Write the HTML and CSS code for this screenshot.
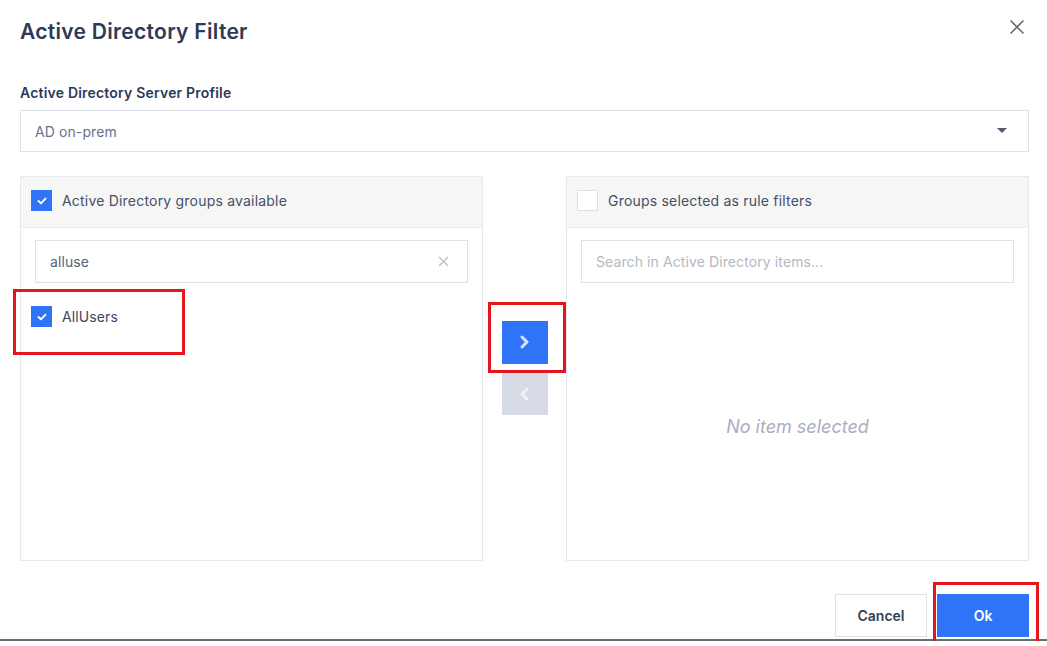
FILE: index.html
```html
<!DOCTYPE html>
<html lang="en">
<head>
<meta charset="utf-8">
<title>Active Directory Filter</title>
<link rel="stylesheet" href="styles.css">
</head>
<body>
<div class="dialog">
  <header class="dlg-header">
    <h1 class="dlg-title">Active Directory Filter</h1>
    <button class="close" aria-label="Close">
      <svg width="16" height="16" viewBox="0 0 16 16"><path d="M1.5 1.5 L14.5 14.5 M14.5 1.5 L1.5 14.5" stroke="#6b6f78" stroke-width="1.6" fill="none"/></svg>
    </button>
  </header>

  <label class="field-label">Active Directory Server Profile</label>
  <div class="select">
    <span class="select-value">AD on-prem</span>
    <svg class="caret" width="10" height="6" viewBox="0 0 10 6"><path d="M0 0 H10 L5 5 Z" fill="#4f5870"/></svg>
  </div>

  <div class="transfer">
    <section class="panel">
      <div class="panel-head">
        <span class="cb checked"><svg width="10" height="8" viewBox="0 0 10 8"><path d="M1.5 4 L4 6.3 L8.5 1.6" stroke="#fff" stroke-width="1.9" fill="none" stroke-linecap="round" stroke-linejoin="round"/></svg></span>
        <span class="panel-title">Active Directory groups available</span>
      </div>
      <div class="search">
        <span class="search-text">alluse</span>
        <svg width="11" height="11" viewBox="0 0 11 11"><path d="M1 1 L10 10 M10 1 L1 10" stroke="#b9bfcb" stroke-width="1.4" fill="none"/></svg>
      </div>
      <div class="list">
        <div class="item">
          <span class="cb checked"><svg width="10" height="8" viewBox="0 0 10 8"><path d="M1.5 4 L4 6.3 L8.5 1.6" stroke="#fff" stroke-width="1.9" fill="none" stroke-linecap="round" stroke-linejoin="round"/></svg></span>
          <span class="item-text">AllUsers</span>
          <span class="mark mark-item"></span>
        </div>
      </div>
    </section>

    <div class="moves">
      <button class="move move-right" aria-label="Add">
        <svg width="11" height="14" viewBox="0 0 11 14"><path d="M3 2 L8 7 L3 12" stroke="#d6e2ff" stroke-width="3" fill="none" stroke-linecap="round" stroke-linejoin="round"/></svg>
        <span class="mark mark-move"></span>
      </button>
      <button class="move move-left" aria-label="Remove">
        <svg width="11" height="14" viewBox="0 0 11 14"><path d="M8 2 L3 7 L8 12" stroke="#eef0f6" stroke-width="3" fill="none" stroke-linecap="round" stroke-linejoin="round"/></svg>
      </button>
    </div>

    <section class="panel">
      <div class="panel-head">
        <span class="cb"></span>
        <span class="panel-title">Groups selected as rule filters</span>
      </div>
      <div class="search">
        <span class="placeholder">Search in Active Directory items...</span>
      </div>
      <div class="empty">No item selected</div>
    </section>
  </div>

  <footer class="dlg-footer">
    <button class="btn btn-cancel">Cancel</button>
    <button class="btn btn-ok">Ok<span class="mark mark-ok"></span></button>
  </footer>
</div>
</body>
</html>
```

FILE: styles.css
```css
* { box-sizing: border-box; }

html, body {
  margin: 0;
  padding: 0;
  background: #fff;
}

body {
  font-family: Inter, "Noto Sans", "Liberation Sans", sans-serif;
  color: #2d3a56;
}

.dialog {
  width: 1047px;
  padding: 0 18px 2px 20px;
  border-bottom: 2px solid #6e6e6e;
}

.dlg-header {
  display: flex;
  justify-content: space-between;
  align-items: flex-start;
  height: 45px;
  padding-top: 18px;
}

.dlg-title {
  margin: 0;
  font-size: 21px;
  line-height: 28px;
  font-weight: 600;
  color: #2d3a56;
  letter-spacing: 0.3px;
}

.close {
  border: 0;
  background: none;
  padding: 0;
  margin: 1px 4px 0 0;
  width: 16px;
  height: 16px;
  display: block;
}
.close svg { display: block; }

.field-label {
  display: block;
  margin-top: 38px;
  font-size: 14px;
  line-height: 20px;
  font-weight: 600;
  letter-spacing: 0.2px;
  color: #2d3a56;
}

.select {
  margin-top: 7px;
  height: 42px;
  border: 1px solid #dde1ea;
  display: flex;
  align-items: center;
  justify-content: space-between;
  padding: 0 21px 0 14px;
}

.select-value {
  font-size: 14px;
  color: #6a7189;
  letter-spacing: 0.1px;
}

.caret { display: block; }

.transfer {
  margin-top: 24px;
  display: grid;
  grid-template-columns: 463px 83px 463px;
  height: 385px;
}

.panel {
  border: 1px solid #e6e8f0;
  display: flex;
  flex-direction: column;
}

.panel-head {
  height: 51px;
  background: #f6f6f5;
  border-bottom: 1px solid #e9ebf1;
  display: flex;
  align-items: center;
  gap: 10px;
  padding: 0 10px 3px;
}

.panel-title {
  font-size: 14px;
  letter-spacing: 0.2px;
  color: #44506a;
}

.cb {
  width: 21px;
  height: 21px;
  flex: none;
  display: flex;
  align-items: center;
  justify-content: center;
  background: #fff;
  border: 1px solid #dcdfe6;
}

.cb.checked {
  background: #2f74f6;
  border-color: #2f74f6;
}

.cb svg { display: block; }

.search {
  margin: 12px 14px 0;
  height: 43px;
  border: 1px solid #dde1ea;
  display: flex;
  align-items: center;
  justify-content: space-between;
  padding: 0 18px 0 14px;
}

.search svg { display: block; }

.search-text {
  font-size: 14px;
  letter-spacing: 0.1px;
  color: #5a6275;
}

.placeholder {
  font-size: 14px;
  letter-spacing: 0.1px;
  color: #b3b8c4;
}

.list {
  margin-top: 13px;
}

.item {
  position: relative;
  display: flex;
  align-items: center;
  gap: 10px;
  padding: 10px 10px;
}

.item-text {
  font-size: 14px;
  letter-spacing: 0.1px;
  color: #3a4762;
}

.mark {
  position: absolute;
  border: 3px solid #e3161d;
  pointer-events: none;
}

.mark-item {
  left: -8px;
  top: -7px;
  width: 172px;
  height: 66px;
}

.moves {
  display: flex;
  flex-direction: column;
  align-items: center;
  justify-content: center;
  gap: 9px;
  padding-bottom: 2px;
}

.move {
  position: relative;
  width: 46px;
  border: 0;
  padding: 0;
  display: flex;
  align-items: center;
  justify-content: center;
}

.move svg { display: block; }

.move-right {
  height: 43px;
  background: #2f74f6;
}

.move-left {
  height: 42px;
  background: #d6dbe6;
}

.mark-move {
  left: -14px;
  top: -19px;
  width: 78px;
  height: 71px;
}

.empty {
  flex: 1;
  display: flex;
  align-items: center;
  justify-content: center;
  padding-top: 10px;
  font-size: 18px;
  font-style: italic;
  color: #a9aebf;
}

.dlg-footer {
  margin-top: 33px;
  display: flex;
  justify-content: flex-end;
  gap: 10px;
  padding-right: 0;
}

.btn {
  height: 43px;
  width: 92px;
  font-family: inherit;
  font-size: 14px;
  font-weight: 600;
  padding: 0;
}

.btn-cancel {
  background: #fff;
  border: 1px solid #dde1ea;
  color: #333f57;
}

.btn-ok {
  position: relative;
  background: #2f74f6;
  border: 1px solid #2f74f6;
  color: #fff;
}

.mark-ok {
  left: -5px;
  top: -13px;
  width: 106px;
  height: 65px;
}
```
